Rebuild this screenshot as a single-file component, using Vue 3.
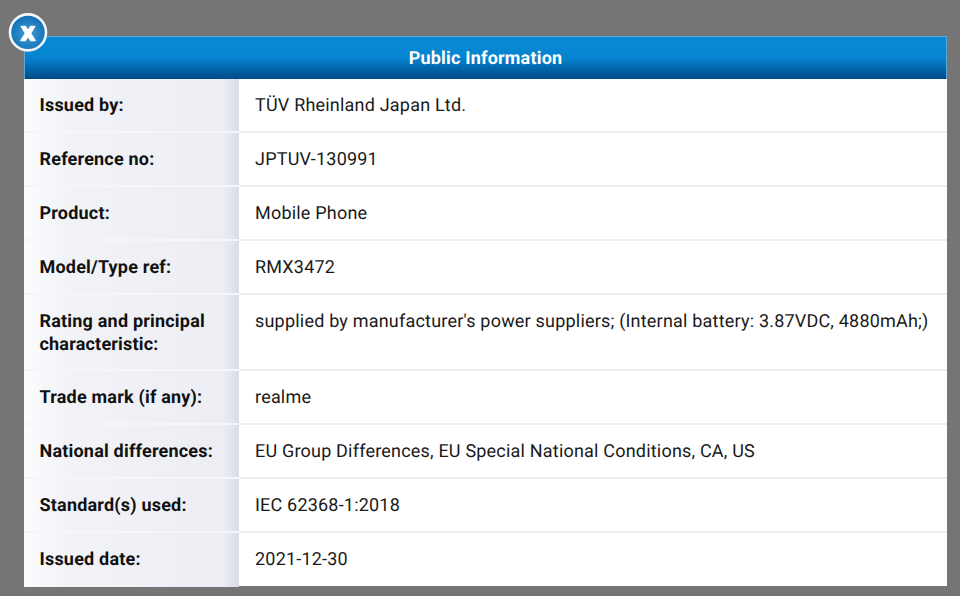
<script setup>
const rows = [
  { label: 'Issued by:', value: 'TÜV Rheinland Japan Ltd.' },
  { label: 'Reference no:', value: 'JPTUV-130991' },
  { label: 'Product:', value: 'Mobile Phone' },
  { label: 'Model/Type ref:', value: 'RMX3472' },
  { label: 'Rating and principal characteristic:', value: "supplied by manufacturer's power suppliers; (Internal battery: 3.87VDC, 4880mAh;)", tall: true },
  { label: 'Trade mark (if any):', value: 'realme' },
  { label: 'National differences:', value: 'EU Group Differences, EU Special National Conditions, CA, US' },
  { label: 'Standard(s) used:', value: 'IEC 62368-1:2018' },
  { label: 'Issued date:', value: '2021-12-30' }
]
</script>

<template>
  <div class="overlay">
    <div class="panel">
      <button class="close" aria-label="Close">
        <svg width="40" height="40" viewBox="0 0 40 40">
          <defs>
            <radialGradient id="closeFill" cx="0.5" cy="0.55" r="0.55">
              <stop offset="0" stop-color="#3f9bd8" />
              <stop offset="1" stop-color="#0f6fb3" />
            </radialGradient>
          </defs>
          <circle cx="20" cy="20.4" r="18" fill="url(#closeFill)" stroke="#f2f6f9" stroke-width="2.6" />
          <path d="M13.2 14.4 L17.4 14.4 L20 18.4 L22.6 14.4 L26.8 14.4 L22.6 21.4 L27.2 28.6 L22.8 28.6 L20 24.4 L17.2 28.6 L12.8 28.6 L17.4 21.4 Z" fill="#fff" stroke="#fff" stroke-width="1.2" stroke-linejoin="round" />
        </svg>
      </button>
      <div class="header">Public Information</div>
      <div class="table">
        <div v-for="row in rows" :key="row.label" class="row" :class="{ tall: row.tall }">
          <div class="label">{{ row.label }}</div>
          <div class="value">{{ row.value }}</div>
        </div>
      </div>
    </div>
  </div>
</template>

<style>
html, body { margin: 0; background: #757575; }
</style>

<style scoped>
.overlay {
  width: 960px;
  height: 596px;
  background: #757575;
  padding: 36px 13px 10px 24px;
  box-sizing: border-box;
  font-family: Roboto, "Liberation Sans", sans-serif;
  overflow: hidden;
  text-rendering: geometricPrecision;
  letter-spacing: 0.2px;
}
.panel {
  position: relative;
  height: 550px;
  background: #fff;
}
.close {
  position: absolute;
  left: -16px;
  top: -24px;
  width: 40px;
  height: 40px;
  padding: 0;
  border: 0;
  background: none;
  z-index: 2;
}
.close svg { display: block; }
.header {
  height: 43px;
  box-sizing: border-box;
  border: 1px solid #5aa9d8;
  border-bottom: 0;
  background: linear-gradient(to bottom, #0a8ad6 0%, #0583cf 50%, #004a86 100%);
  color: #fff;
  font-size: 18px;
  font-weight: 700;
  line-height: 43px;
  text-align: center;
}
.row {
  display: flex;
  height: 54px;
}
.row.tall { height: 76px; }
.label {
  width: 215px;
  box-sizing: border-box;
  padding: 15px 10px 0 15.5px;
  background: linear-gradient(to right, #fbfcfd 0%, #f1f3f7 20%, #eceef4 92%, #d8dde9 100%);
  color: #111;
  font-size: 18px;
  font-weight: 700;
  line-height: 23px;
  border-bottom: 2px solid #f5f6f9;
}
.value {
  flex: 1;
  padding: 15px 0 0 16px;
  color: #1a1a1a;
  font-size: 18px;
  line-height: 23px;
  white-space: nowrap;
  border-bottom: 2px solid #eeeeef;
}
.row:last-child .label,
.row:last-child .value { border-bottom: 0; }
</style>
